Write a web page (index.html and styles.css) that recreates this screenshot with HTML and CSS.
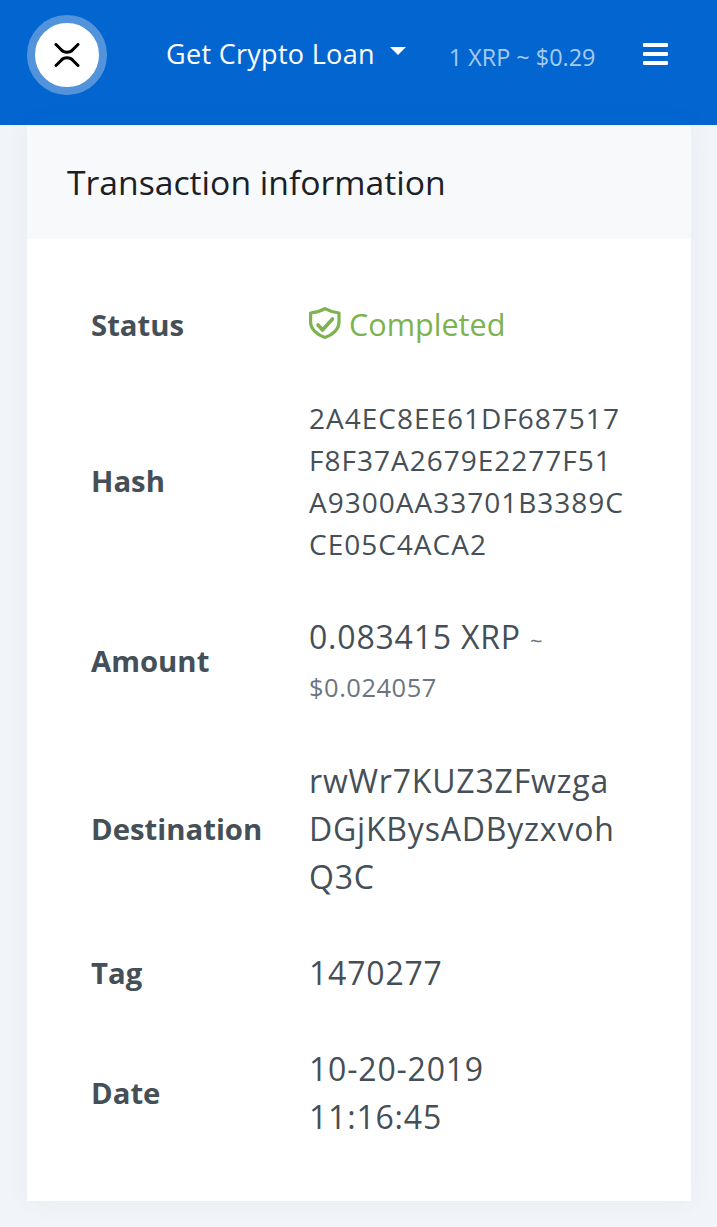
FILE: index.html
```html
<!DOCTYPE html>
<html lang="en">
<head>
<meta charset="utf-8">
<title>Transaction information</title>
<link rel="stylesheet" href="styles.css">
</head>
<body>
<header class="navbar">
  <div class="logo">
    <svg class="logo-mark" viewBox="0 0 26 24" width="26" height="24" aria-hidden="true">
      <path d="M2 1.5 L7 6.5 C10 10.2 16 10.2 19 6.5 L24 1.5" />
      <path d="M2 22.5 L7 17.5 C10 13.8 16 13.8 19 17.5 L24 22.5" />
    </svg>
  </div>
  <div class="nav-menu">Get Crypto Loan<span class="caret"></span></div>
  <div class="rate">1 XRP ~ $0.29</div>
  <div class="burger"><span></span><span></span><span></span></div>
</header>
<main class="card">
  <h1 class="card-header">Transaction information</h1>
  <dl class="details">
    <dt>Status</dt>
    <dd class="status">
      <svg class="shield" viewBox="0 0 32 34" width="32" height="34" aria-hidden="true">
        <path d="M15.9 1.7 C20 4 25 5.5 30 6 V15 C30 22 24 28 15.9 30.5 C8 28 1.6 22 1.6 15 V6 C7 5.5 12 4 15.9 1.7 Z" />
        <path class="check" d="M9 18 L13.5 23 L23.5 12" />
      </svg>
      Completed
    </dd>
    <dt>Hash</dt>
    <dd class="hash">2A4EC8EE61DF687517<br>F8F37A2679E2277F51<br>A9300AA33701B3389C<br>CE05C4ACA2</dd>
    <dt>Amount</dt>
    <dd>0.083415 XRP <small class="tilde">~</small><small class="usd">$0.024057</small></dd>
    <dt>Destination</dt>
    <dd>rwWr7KUZ3ZFwzga<br>DGjKBysADByzxvoh<br>Q3C</dd>
    <dt>Tag</dt>
    <dd>1470277</dd>
    <dt>Date</dt>
    <dd>10-20-2019<br>11:16:45</dd>
  </dl>
</main>
</body>
</html>
```
FILE: styles.css
```css
* { box-sizing: border-box; }
html, body { margin: 0; padding: 0; }
body {
  background: #f1f5f9;
  font-family: "Open Sans", "Noto Sans", sans-serif;
  color: #454f57;
  height: 1227px;
  overflow: hidden;
}
.navbar {
  height: 125px;
  background: #0366d0;
  display: flex;
  align-items: flex-start;
  padding: 15px 49px 0 27px;
  color: #fff;
}
.logo {
  width: 80px;
  height: 80px;
  border-radius: 50%;
  background: #fff;
  border: 8px solid #5293dc;
  display: flex;
  align-items: center;
  justify-content: center;
  flex: none;
}
.logo-mark { fill: none; stroke: #000; stroke-width: 3; stroke-linecap: round; }
.nav-menu {
  margin-left: 59px;
  margin-top: 20px;
  font-size: 27px;
  letter-spacing: 0.3px;
  line-height: 38px;
  font-weight: 500;
  white-space: nowrap;
  display: flex;
  align-items: center;
}
.caret {
  margin-left: 15px;
  margin-top: -7px;
  border-left: 8.5px solid transparent;
  border-right: 8.5px solid transparent;
  border-top: 8.5px solid #fff;
}
.rate {
  margin-left: 43px;
  margin-top: 25px;
  font-size: 23.4px;
  line-height: 34px;
  color: #a6cbf3;
  white-space: nowrap;
}
.burger {
  margin-left: auto;
  margin-top: 28px;
  width: 25px;
  display: flex;
  flex-direction: column;
  gap: 5px;
}
.burger span { display: block; height: 4px; background: #fff; border-radius: 1px; }
.card {
  margin: 0 26px 0 27px;
  height: 1076px;
  background: #fff;
  box-shadow: 0 0 24px rgba(60, 90, 130, 0.06);
}
.card-header {
  margin: 0;
  height: 114px;
  padding: 0 40px;
  background: #f7f9fb;
  display: flex;
  align-items: center;
  font-size: 33.7px;
  font-weight: 400;
  color: #1b2026;
}
.details {
  margin: 0;
  padding: 62px 0 0 64px;
  display: grid;
  grid-template-columns: 218px 1fr;
  row-gap: 48px;
  align-items: center;
}
dt { font-size: 29.3px; font-weight: 700; line-height: 48px; }
dd { margin: 0; font-size: 32px; letter-spacing: 0.8px; line-height: 48px; white-space: nowrap; }
.hash { font-size: 28px; letter-spacing: 1px; line-height: 42px; }
.status { height: 48px; padding-bottom: 2px; color: #7cb24f; display: flex; align-items: center; gap: 8px; font-size: 30.6px; letter-spacing: 0; }
.shield { fill: none; stroke: #7cb24f; stroke-width: 3.2; stroke-linejoin: round; stroke-linecap: round; }
.check { stroke-width: 3.6; }
.tilde { font-size: 22px; line-height: 1; color: #6c757d; }
.usd { display: block; font-size: 25.5px; letter-spacing: 0.5px; line-height: 44px; padding-top: 4px; color: #6c757d; }
```
